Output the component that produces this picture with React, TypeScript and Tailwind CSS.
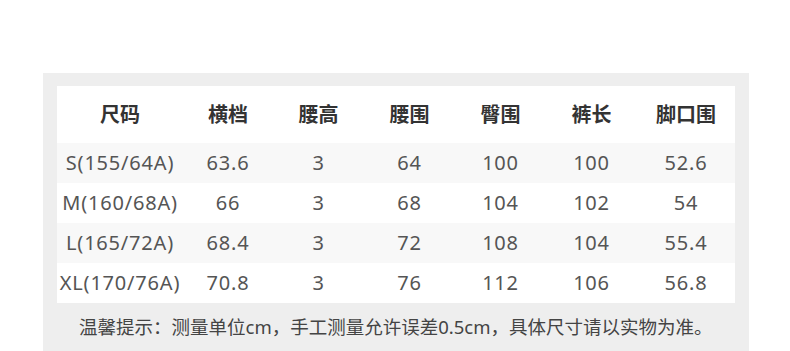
const HEAD = ['尺码', '横档', '腰高', '腰围', '臀围', '裤长', '脚口围']
const WIDTHS = ['w-[126px]', 'w-[90px]', 'w-[91px]', 'w-[91px]', 'w-[91px]', 'w-[91px]', 'w-[98px]']

const ROWS = [
  ['S(155/64A)', '63.6', '3', '64', '100', '100', '52.6'],
  ['M(160/68A)', '66', '3', '68', '104', '102', '54'],
  ['L(165/72A)', '68.4', '3', '72', '108', '104', '55.4'],
  ['XL(170/76A)', '70.8', '3', '76', '112', '106', '56.8'],
]

export default function App() {
  return (
    <div
      className="h-[351px] w-[790px] overflow-hidden bg-white pt-[73px] pl-[43px]"
      style={{ fontFamily: '"Noto Sans", "Noto Sans CJK SC", sans-serif' }}
    >
      <div className="h-[278px] w-[706px] bg-[#eeeeee] px-[14px] pt-[13px]">
        <table className="w-[678px] table-fixed border-collapse bg-white">
          <colgroup>
            {WIDTHS.map((w, i) => (
              <col key={i} className={w} />
            ))}
          </colgroup>
          <thead>
            <tr className="h-[57px]">
              {HEAD.map((h) => (
                <th key={h} className="p-0 text-center text-[20px] font-bold text-[#333333]">
                  {h}
                </th>
              ))}
            </tr>
          </thead>
          <tbody>
            {ROWS.map((r, i) => (
              <tr key={r[0]} className={`h-[40px] ${i % 2 === 0 ? 'bg-[#f8f8f8]' : 'bg-white'}`}>
                {r.map((c, j) => (
                  <td key={j} className="p-0 text-center text-[20px] tracking-[0.8px] whitespace-nowrap text-[#555555]">
                    {c}
                  </td>
                ))}
              </tr>
            ))}
          </tbody>
        </table>
        <p className="mt-[10px] pl-[22px] text-[18.5px] whitespace-nowrap text-[#444444]">
          温馨提示：测量单位cm，手工测量允许误差0.5cm，具体尺寸请以实物为准。
        </p>
      </div>
    </div>
  )
}
